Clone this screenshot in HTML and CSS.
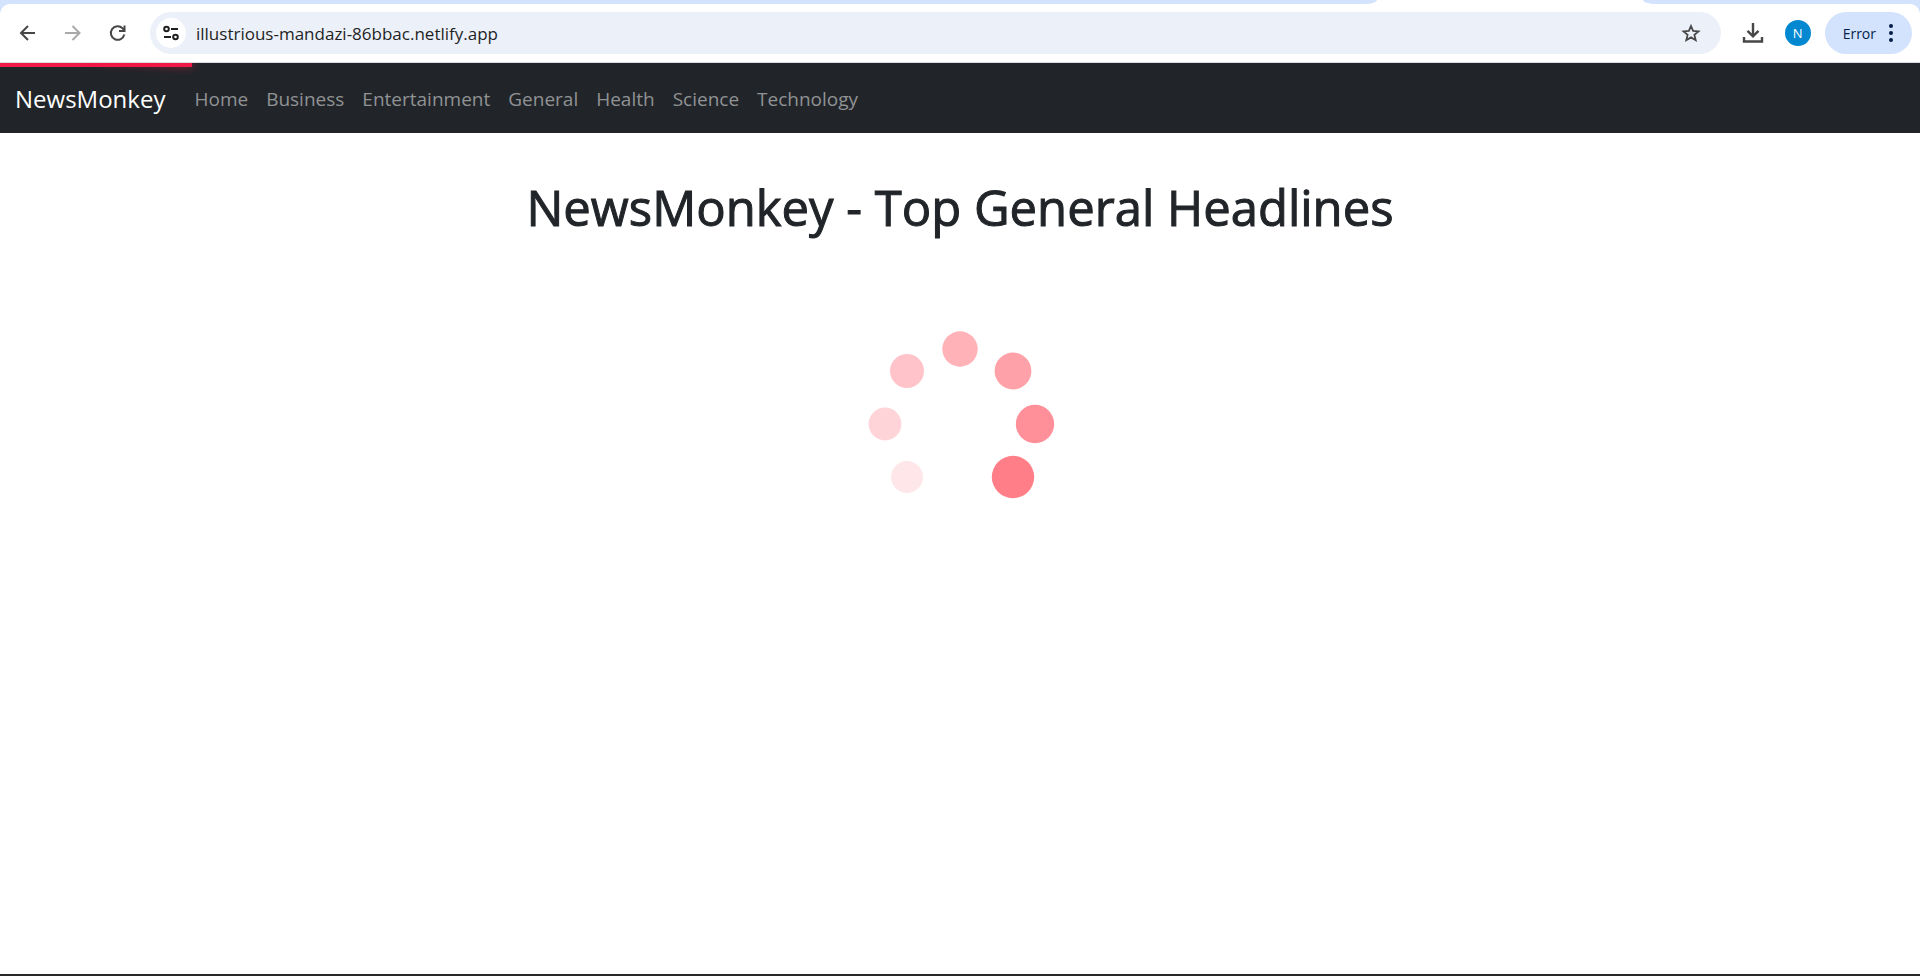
FILE: index.html
```html
<!DOCTYPE html>
<html lang="en">
<head>
<meta charset="utf-8">
<title>NewsMonkey</title>
<link rel="stylesheet" href="styles.css">
</head>
<body>
<header class="browser">
  <div class="tab-strip">
    <div class="tabs-before"></div>
    <div class="active-tab"></div>
    <div class="tabs-after"></div>
  </div>
  <div class="toolbar">
    <div class="history">
      <button class="icon-button" type="button" aria-label="Back"><svg width="20" height="20" viewBox="0 0 20 20" fill="none" stroke="#474747" stroke-width="2"><path d="M17 10H3.500M10 3l-7 7 7 7"/></svg></button>
      <button class="icon-button" type="button" aria-label="Forward" disabled><svg width="20" height="20" viewBox="0 0 20 20" fill="none" stroke="#a9a9a9" stroke-width="2"><path d="M2 10h14M9.500 3l7 7-7 7"/></svg></button>
      <button class="icon-button" type="button" aria-label="Reload"><svg width="20" height="20" viewBox="0 0 20 20" fill="none" stroke="#474747" stroke-width="2"><path d="M16.300 11.500A6.800 6.800 0 1 1 14.500 5.200L16.500 7.200"/><path d="M16.500 2.500V8H11"/></svg></button>
    </div>
    <div class="address">
      <button class="site-info" type="button" aria-label="Site information"><svg width="18" height="18" viewBox="0 0 18 18" fill="none" stroke="#1f1f1f" stroke-width="2"><circle cx="4.500" cy="5" r="2.300"/><path d="M9 5h7M2 13h7"/><circle cx="13.500" cy="13" r="2.300"/></svg></button>
      <input class="url" type="text" aria-label="Address" value="illustrious-mandazi-86bbac.netlify.app">
      <button class="bookmark" type="button" aria-label="Bookmark"><svg width="20" height="20" viewBox="0 0 20 20" fill="none" stroke="#474747" stroke-width="1.800"><path d="m10 3 2.100 4.900 5.400.500-4.100 3.500 1.300 5.300L10 14.400l-4.700 2.800 1.300-5.300-4.100-3.500 5.400-.500z"/></svg></button>
    </div>
    <div class="actions">
      <button class="icon-button" type="button" aria-label="Downloads"><svg width="22" height="22" viewBox="0 0 22 22" fill="none" stroke="#474747" stroke-width="2.400"><path d="M11 1v13M5.500 8.800 11 14.300l5.500-5.500M2 15v4.500h18V15"/></svg></button>
      <button class="avatar" type="button" aria-label="Profile">N</button>
      <button class="error" type="button">Error<svg width="6" height="20" viewBox="0 0 6 20" fill="#041e49"><circle cx="3" cy="3" r="2"/><circle cx="3" cy="10" r="2"/><circle cx="3" cy="17" r="2"/></svg></button>
    </div>
  </div>
</header>
<nav class="navbar">
  <div class="progress"><div class="progress-glow"></div></div>
  <a class="brand" href="#">NewsMonkey</a>
  <a class="nav-link" href="#">Home</a>
  <a class="nav-link" href="#">Business</a>
  <a class="nav-link" href="#">Entertainment</a>
  <a class="nav-link" href="#">General</a>
  <a class="nav-link" href="#">Health</a>
  <a class="nav-link" href="#">Science</a>
  <a class="nav-link" href="#">Technology</a>
</nav>
<main class="content">
  <h1 class="title">NewsMonkey - Top General Headlines</h1>
  <svg class="spinner" width="250" height="250" viewBox="0 0 250 250" role="img" aria-label="Loading">
    <circle cx="125" cy="50" r="17.700" fill="#ffb2b8"/>
    <circle cx="178" cy="72" r="18.400" fill="#ffa1a8"/>
    <circle cx="200" cy="125" r="19.200" fill="#ff8f98"/>
    <circle cx="178" cy="178" r="21.200" fill="#ff7e87"/>
    <circle cx="72" cy="178" r="16" fill="#ffe6e9"/>
    <circle cx="50" cy="125" r="16.400" fill="#ffd4d9"/>
    <circle cx="72" cy="72" r="17" fill="#ffc3c9"/>
  </svg>
</main>
<footer class="bottom-edge"></footer>
</body>
</html>
```
FILE: styles.css
```css
* {
  box-sizing: border-box;
}

body {
  display: flex;
  flex-direction: column;
  min-height: 100vh;
  margin: 0;
  background: #fff;
  color: #212529;
  font-family: "Open Sans", "Noto Sans", sans-serif;
}

button {
  padding: 0;
  border: 0;
  background: none;
  font: inherit;
}

svg {
  display: block;
}

.browser {
  background: #d3e3fd;
  border-bottom: 1px solid #dadce0;
}

.tab-strip {
  display: flex;
  height: 4px;
  background: #fff;
}

.tabs-before,
.tabs-after {
  background: #d3e3fd;
}

.tabs-before {
  flex: 1;
  border-bottom-right-radius: 12px 4px;
}

.active-tab {
  width: 266px;
}

.tabs-after {
  width: 277px;
  border-bottom-left-radius: 12px 4px;
}

.toolbar {
  display: flex;
  align-items: center;
  height: 58px;
  padding: 0 8px;
  border-radius: 10px 10px 0 0;
  background: #fff;
}

.history {
  display: flex;
  gap: 5px;
  margin-right: 12px;
}

.icon-button {
  display: flex;
  align-items: center;
  justify-content: center;
  width: 40px;
  height: 40px;
}

.address {
  display: flex;
  flex: 1;
  align-items: center;
  height: 42px;
  padding: 0 20px 0 6px;
  border-radius: 21px;
  background: #ebf0f9;
}

.site-info {
  display: flex;
  align-items: center;
  justify-content: center;
  width: 30px;
  height: 30px;
  border-radius: 50%;
  background: #fff;
}

.url {
  flex: 1;
  min-width: 0;
  margin-left: 10px;
  padding: 0;
  border: 0;
  outline: 0;
  background: transparent;
  color: #1f1f1f;
  font: 17px "Open Sans", "Noto Sans", sans-serif;
}

.actions {
  display: flex;
  align-items: center;
  margin-left: 12px;
}

.avatar {
  width: 26px;
  height: 26px;
  margin: 0 14px 0 12px;
  border-radius: 50%;
  background: #0288d1;
  color: #fff;
  font-size: 13px;
}

.error {
  display: flex;
  align-items: center;
  gap: 12px;
  height: 42px;
  padding: 0 18px;
  border-radius: 21px;
  background: #d3e3fd;
  color: #041e49;
  font-size: 14px;
}

.navbar {
  position: relative;
  display: flex;
  align-items: center;
  height: 70px;
  padding: 0 15px;
  overflow: hidden;
  background: #212529;
}

.progress {
  position: absolute;
  top: 0;
  left: 0;
  width: 10%;
  height: 4px;
  background: #f11946;
}

.progress-glow {
  width: 50%;
  height: 100%;
  margin-left: auto;
  box-shadow: 0 0 10px #f11946;
  transform: rotate(3deg) translateY(-4px);
}

.brand {
  margin-right: 20px;
  color: #fff;
  font-size: 24px;
  text-decoration: none;
}

.nav-link {
  padding: 11px 9px 9px;
  color: #909294;
  font-size: 19px;
  text-decoration: none;
}

.content {
  display: flex;
  flex: 1;
  flex-direction: column;
  align-items: center;
  background: #fff;
}

.title {
  margin: 44px 0 62px;
  font-size: 49px;
  font-weight: 500;
  line-height: 60px;
  text-align: center;
  -webkit-text-stroke: 1px #212529;
}

.bottom-edge {
  height: 2px;
  background: #29292b;
}
```
